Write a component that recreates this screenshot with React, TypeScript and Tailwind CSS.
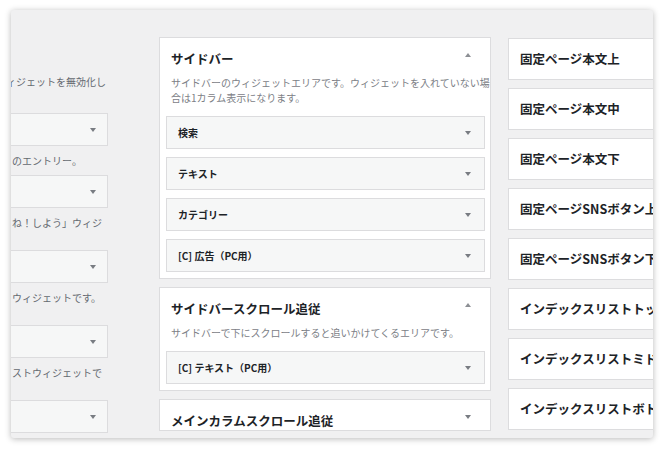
const font = "font-['Noto_Sans_CJK_JP','Noto_Sans',sans-serif]";

function ArrowDown() {
  return <span className="block h-0 w-0 border-x-[3px] border-t-[4px] border-x-transparent border-t-[#787c82]" />;
}

function ArrowUp() {
  return <span className="block h-0 w-0 border-x-[3px] border-b-[4px] border-x-transparent border-b-[#8c8f94]" />;
}

const available = [
  { desc: "のエントリー。", tall: false },
  { desc: "ね！しよう」ウィジ", tall: true },
  { desc: "ウィジェットです。", tall: true },
  { desc: "ストウィジェットで", tall: true },
  { desc: null, tall: false },
];

const rightAreas = [
  "固定ページ本文上",
  "固定ページ本文中",
  "固定ページ本文下",
  "固定ページSNSボタン上",
  "固定ページSNSボタン下",
  "インデックスリストトップ",
  "インデックスリストミドル",
  "インデックスリストボトム",
  "インデックス下",
];

function WidgetRow({ title }: { title: string }) {
  return (
    <div className="flex h-[33px] items-center justify-between border border-[#dcdcde] bg-[#f6f7f7] pl-[11px] pr-[13px]">
      <span className="text-[10px] font-semibold text-[#1d2327]">{title}</span>
      <ArrowDown />
    </div>
  );
}

function Panel({
  title,
  desc,
  widgets,
  open = true,
}: {
  title: string;
  desc?: React.ReactNode;
  widgets?: string[];
  open?: boolean;
}) {
  return (
    <div className="border border-[#dcdcde] bg-white">
      <div className="flex items-start justify-between pl-[11px] pr-[19px] pt-[12px]">
        <h3 className="text-[12.5px] font-bold leading-[18px] text-[#1d2327]">{title}</h3>
        <span className="mt-[3px]">{open ? <ArrowUp /> : <ArrowDown />}</span>
      </div>
      {desc && (
        <p className="mt-[7px] pl-[11px] text-[10px] leading-[15px] text-[#7c8086]">{desc}</p>
      )}
      {widgets && (
        <div className="flex flex-col gap-[8px] pb-[6px] pl-[6px] pr-[5px] pt-[11px]">
          {widgets.map((w) => (
            <WidgetRow key={w} title={w} />
          ))}
        </div>
      )}
    </div>
  );
}

export default function App() {
  return (
    <div className={`min-h-[451px] bg-white px-[11px] pt-[10px] ${font}`}>
      <div className="flex h-[428px] overflow-hidden rounded-[3px] bg-[#f0f0f1] pt-[27px] shadow-[0_1px_6px_rgba(0,0,0,0.28)]">
        {/* available widgets (cut off on the left) */}
        <div className="w-[97px] shrink-0 overflow-hidden pt-[38px]">
          <p className="-ml-[15px] h-[26px] whitespace-nowrap text-[10px] leading-[13px] text-[#646970]">
            ウィジェットを無効化し
          </p>
          <div className="mt-[12px]">
            {available.map((item, i) => (
              <div key={i}>
                <div className="flex h-[33px] items-center justify-end border border-l-0 border-[#dcdcde] bg-[#f6f7f7] pr-[11px]">
                  <ArrowDown />
                </div>
                {item.desc && (
                  <p
                    className={`mb-[8px] mt-[8px] whitespace-nowrap pl-[1px] text-[10px] leading-[13px] text-[#646970] ${
                      item.tall ? "h-[26px]" : "h-[13px]"
                    }`}
                  >
                    {item.desc}
                  </p>
                )}
              </div>
            ))}
          </div>
        </div>

        {/* sidebars */}
        <div className="ml-[51px] flex w-[332px] shrink-0 flex-col gap-[8px]">
          <Panel
            title="サイドバー"
            desc={
              <>
                サイドバーのウィジェットエリアです。ウィジェットを入れていない場
                <br />
                合は1カラム表示になります。
              </>
            }
            widgets={["検索", "テキスト", "カテゴリー", "[C] 広告（PC用）"]}
          />
          <Panel
            title="サイドバースクロール追従"
            desc="サイドバーで下にスクロールすると追いかけてくるエリアです。"
            widgets={["[C] テキスト（PC用）"]}
          />
          <Panel title="メインカラムスクロール追従" open={false} />
        </div>

        <div className="ml-[17px] flex w-[300px] shrink-0 flex-col gap-[8px] pt-px">
          {rightAreas.map((a) => (
            <div
              key={a}
              className="flex h-[42px] shrink-0 items-center whitespace-nowrap border border-[#dcdcde] bg-white pl-[11px] text-[12.5px] font-bold text-[#1d2327]"
            >
              {a}
            </div>
          ))}
        </div>
      </div>
    </div>
  );
}
